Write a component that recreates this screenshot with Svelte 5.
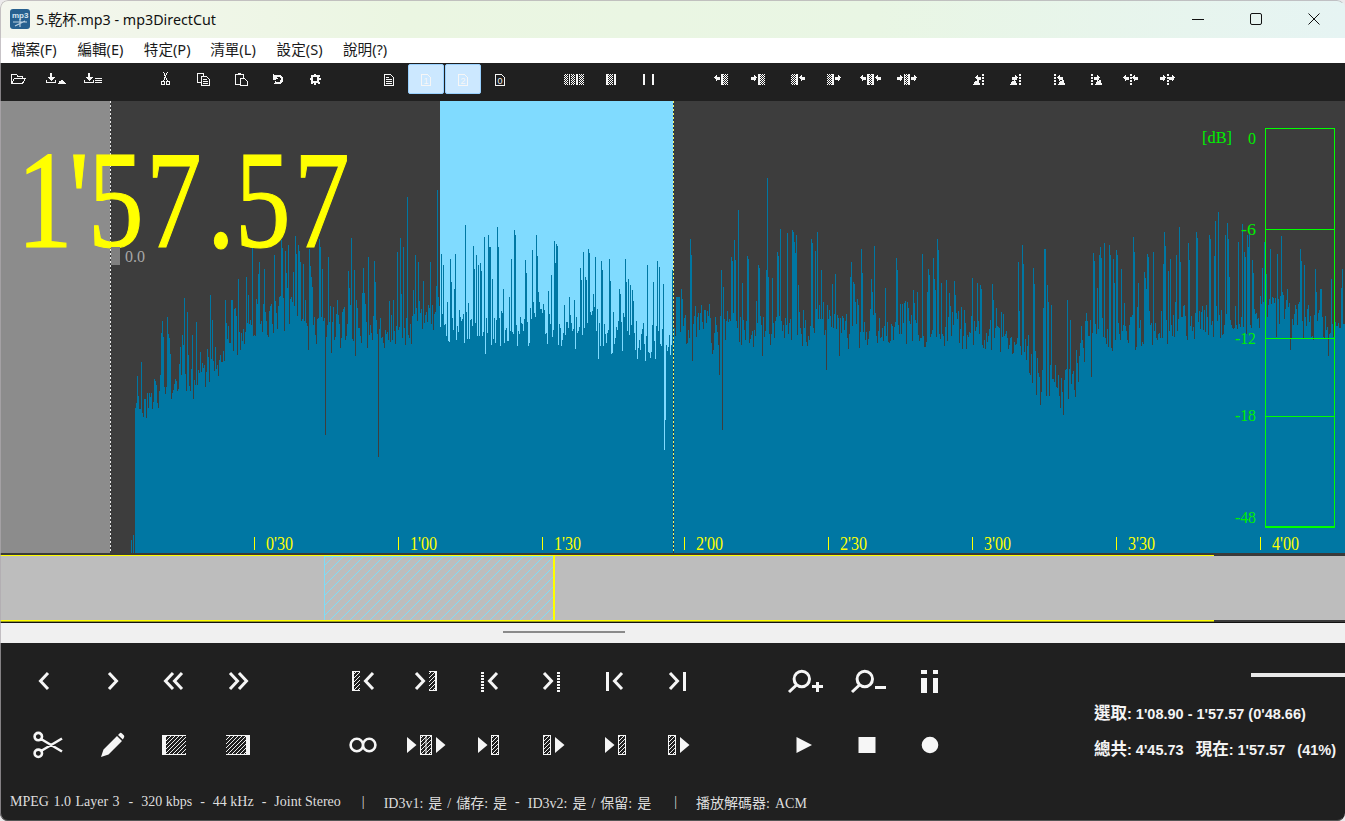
<script>
  const menus = ['檔案(F)', '編輯(E)', '特定(P)', '清單(L)', '設定(S)', '說明(?)'];

  // small path helpers, coordinates are plain pixels inside each icon box
  const r = (x, y, w, h) => `M${x} ${y}h${w}v${h}h${-w}z`;
  const chevL = (x) => `M${x + 9} 8L${x + 1.5} 16L${x + 9} 24`;
  const chevR = (x) => `M${x} 8L${x + 7.5} 16L${x} 24`;
  const tri = (x) => `M${x} 8L${x + 9.5} 16L${x} 24z`;
  const frameL = (x) => r(x, 6, 2, 20) + r(x, 6, 8, 1) + r(x, 25, 8, 1);
  const frameR = (x) => r(x + 6, 6, 2, 20) + r(x, 6, 8, 1) + r(x, 25, 8, 1);
  const box = (x) => r(x, 6, 8, 1) + r(x, 25, 8, 1) + r(x, 6, 1, 20) + r(x + 7, 6, 1, 20);
  const dashes = (x) => [7, 10, 13, 16, 19, 22, 25].map((y) => r(x, y, 3, 2)).join('');

  const rowA = [
    [
      { s: chevL(7) },
      { s: chevR(14) },
      { s: chevL(6) + chevL(15) },
      { s: chevR(9) + chevR(18) }
    ],
    [
      { h: r(5, 6, 8, 20), f: frameL(5), s: chevL(17) },
      { h: r(19, 6, 8, 20), f: frameR(19), s: chevR(6) },
      { f: dashes(8), s: chevL(15) },
      { f: dashes(21), s: chevR(8) },
      { f: r(7, 7, 3, 19), s: chevL(14) },
      { f: r(21, 7, 3, 19), s: chevR(8) }
    ],
    [
      {
        w: 3,
        s: 'M21.5 14a7.7 7.7 0 1 1-15.4 0a7.7 7.7 0 1 1 15.4 0M8.5 20L1 27',
        f: r(24, 20, 11, 3) + r(28, 17, 3, 10)
      },
      {
        w: 3,
        s: 'M21.5 14a7.7 7.7 0 1 1-15.4 0a7.7 7.7 0 1 1 15.4 0M8.5 20L1 27',
        f: r(24, 21, 11, 3)
      },
      { f: r(7, 5, 6, 4) + r(19, 5, 5, 4) + r(7, 13, 6, 15) + r(19, 13, 5, 15) }
    ]
  ];

  const rowB = [
    [
      {
        w: 2.6,
        s: 'M10 7.6a3.7 3.7 0 1 1-7.4 0a3.7 3.7 0 1 1 7.4 0M10 24.3a3.7 3.7 0 1 1-7.4 0a3.7 3.7 0 1 1 7.4 0M9 10L30 22.5M9 22L30 9.5'
      },
      {
        f: 'M6 28L8.5 20.5L22 7L27 12L13.5 25.5zM23 6L25 4Q26 3.5 27 4.5L29 6.5Q29.5 7.5 29 8.5L27.8 10.5z'
      },
      { h: r(4, 6, 24, 20), f: r(4, 6, 4, 20) + r(4, 6, 24, 1) + r(4, 25, 24, 1) },
      { h: r(5, 6, 24, 20), f: r(25, 6, 4, 20) + r(5, 6, 24, 1) + r(5, 25, 24, 1) }
    ],
    [
      {
        w: 2.6,
        s: 'M16 16a6.2 6.2 0 1 1-12.4 0a6.2 6.2 0 1 1 12.4 0M28.4 16a6.2 6.2 0 1 1-12.4 0a6.2 6.2 0 1 1 12.4 0'
      },
      {
        h: r(10, 6, 12, 20),
        f: tri(-3) + tri(26) + r(10, 6, 12, 1) + r(10, 25, 12, 1) + r(10, 6, 1, 20) + r(15.5, 6, 1, 20) + r(21, 6, 1, 20)
      },
      { h: r(18, 6, 8, 20), f: tri(5) + box(18) },
      { h: r(7, 6, 8, 20), f: tri(19) + box(7) },
      { h: r(19, 6, 8, 20), f: tri(6) + box(19) },
      { h: r(6, 6, 8, 20), f: tri(18) + box(6) }
    ],
    [
      { f: 'M8.5 8L24 16L8.5 24z' },
      { f: r(7.5, 8, 17, 16) },
      { f: 'M24.3 16a8.3 8.3 0 1 1-16.6 0a8.3 8.3 0 1 1 16.6 0z' }
    ]
  ];

  const aL = (x) => `M${x} 6.5l3-3v2h3v3h-3v2z`;
  const aR = (x) => `M${x + 6} 6.5l-3-3v2h-3v3h3v2z`;
  const tdots = (x) => [3, 6, 9, 12].map((y) => r(x, y, 2, 2)).join('');
  const hill = (x) => `M${x} 14l2-4 1 1 2-3 1 2 1 4z`;
  const page = 'M3.5 3.5h6l3 3v8h-9z';
  const dl = r(4, 2, 2, 5) + 'M1 6h8l-4 4z' + r(0, 11, 10, 1) + r(0, 9, 1, 2) + r(9, 9, 1, 2);

  // center is the x of the icon on the toolbar
  const tools = [
    { center: 18, s: 'M1.5 12.5V3.5h5l1 1.5h5v2M1.5 12.5h11l3-5.5h-11z' },
    { center: 54, f: dl + 'M12 13l2-4 1 2 1-3 2 3 1-1 1 3z' },
    { center: 92, f: dl + r(11, 7, 7, 1) + r(11, 9, 7, 1) + r(11, 11, 7, 1) },
    {
      center: 165,
      s: 'M8 12a2 2 0 1 1-4 0a2 2 0 1 1 4 0M13 12a2 2 0 1 1-4 0a2 2 0 1 1 4 0M6.5 10L10.5 1M10.5 10L6.5 1'
    },
    {
      center: 204,
      s: 'M1.5 11.5v-9h6v2M1.5 11.5h3M5.5 5.5h5l3 3v6h-8z',
      f: r(7, 8, 4, 1) + r(7, 10, 5, 1) + r(7, 12, 5, 1)
    },
    { center: 241, s: 'M6.5 13.5h-4v-10h8v3M7.5 7.5h4l3 3v4h-7z', f: r(5, 2, 3, 2) },
    { center: 278, w: 2.4, s: 'M5 11.5c4 2 7 0 7-3.5c0-3-4-4-7-2', f: 'M3 3l0 6l5-1z' },
    {
      center: 315,
      w: 2,
      s: 'M11.5 8a3.5 3.5 0 1 1-7 0a3.5 3.5 0 1 1 7 0',
      f:
        r(7, 2.5, 2, 2) + r(7, 11.5, 2, 2) + r(2.5, 7, 2, 2) + r(11.5, 7, 2, 2) +
        r(3.5, 3.5, 2, 2) + r(10.5, 3.5, 2, 2) + r(3.5, 10.5, 2, 2) + r(10.5, 10.5, 2, 2)
    },
    { center: 389, s: page, f: r(5, 6, 3, 1) + r(5, 8, 6, 1) + r(5, 10, 6, 1) + r(5, 12, 6, 1) },
    { center: 426, s: page, t: '1', on: true },
    { center: 463, s: page, t: '2', on: true },
    { center: 500, s: page, t: '0' },
    {
      center: 574,
      c: r(-2, 3, 4, 11) + r(5, 3, 4, 11) + r(13, 3, 5, 11),
      f: r(3, 3, 1, 11) + r(10, 3, 2, 11)
    },
    { center: 611, c: r(5, 3, 5, 11), f: r(3, 3, 2, 11) + r(11, 3, 2, 11) },
    { center: 648, f: r(3, 3, 2, 11) + r(12, 3, 2, 11) },
    { center: 720, c: r(11, 3, 5, 11), f: aL(2) + r(9, 3, 2, 11) },
    { center: 757, c: r(11, 3, 5, 11), f: aR(2) + r(9, 3, 2, 11) },
    { center: 797, c: r(2, 3, 5, 11), f: r(7, 3, 2, 11) + aL(10) },
    { center: 834, c: r(1, 3, 5, 11), f: r(6, 3, 2, 11) + aR(9) },
    { center: 870, c: r(7, 3, 3, 11), f: aL(-2) + r(5, 3, 2, 11) + r(10, 3, 2, 11) + aL(13) },
    { center: 907, c: r(6, 3, 3, 11), f: aR(-2) + r(5, 3, 1, 11) + r(9, 3, 2, 11) + aR(12) },
    { center: 978, f: aL(5) + hill(3) + tdots(12) },
    { center: 1015, f: aR(5) + hill(3) + tdots(12) },
    { center: 1059, f: tdots(3) + aL(6) + hill(7) },
    { center: 1096, f: tdots(3) + aR(6) + hill(7) },
    { center: 1130, f: aL(1) + tdots(8) + aL(10) },
    { center: 1167, f: aR(1) + tdots(8) + aR(10) }
  ];

  // piecewise linear level over x
  function lerp(points, x) {
    for (let i = 1; i < points.length; i++) {
      if (x <= points[i][0]) {
        const [x0, y0] = points[i - 1];
        const [x1, y1] = points[i];
        return y0 + ((y1 - y0) * (x - x0)) / (x1 - x0);
      }
    }
    return points[points.length - 1][1];
  }

  const bodyLine = [
    [135, 440], [150, 405], [200, 385], [240, 350], [250, 330], [290, 330], [300, 340], [400, 338],
    [440, 332], [520, 338], [610, 345], [670, 355], [676, 335], [800, 338],
    [900, 335], [1000, 345], [1030, 382], [1060, 400], [1075, 392], [1085, 350], [1200, 328], [1345, 332]
  ];
  const peakLine = [
    [135, 400], [140, 325], [160, 305], [200, 290], [240, 250], [260, 240], [300, 235], [400, 225],
    [440, 215], [520, 225], [600, 250], [670, 262], [680, 232], [700, 225], [800, 225], [900, 235],
    [1000, 240], [1100, 235], [1150, 230], [1220, 215], [1345, 250]
  ];
  const spikes = {
    131: 540, 133: 535, 325: 435, 378: 457, 407: 197, 437: 190, 664: 450, 665: 420, 722: 430,
    719: 375, 767: 178, 738: 210, 1218: 212, 1040: 405, 1063: 415, 826: 370,
    676: 297, 677: 297, 678: 297, 679: 297
  };

  let seed = 4711;
  function rnd() {
    seed = (seed + 0x6d2b79f5) | 0;
    let t = Math.imul(seed ^ (seed >>> 15), 1 | seed);
    t = (t + Math.imul(t ^ (t >>> 7), 61 | t)) ^ t;
    return ((t ^ (t >>> 14)) >>> 0) / 4294967296;
  }

  let wave = '';
  let wobble = 0;
  let lastSpike = 0;
  for (let x = 130; x < 1345; x++) {
    let top;
    if (spikes[x]) {
      top = spikes[x];
    } else if (x < 135) {
      continue;
    } else {
      wobble = wobble * 0.92 + (rnd() - 0.5) * 9;
      const base = lerp(bodyLine, x);
      const peak = lerp(peakLine, x);
      const mid = base - 20 + wobble;
      const pick = rnd();
      if (lastSpike && rnd() < 0.3) top = lastSpike + rnd() * 25;
      else if (pick < 0.27) top = mid - (mid - peak) * Math.pow(rnd(), 0.85);
      else if (pick < 0.62) top = mid + rnd() * (base - mid + 10);
      else if (pick < 0.64) top = base + rnd() * 30;
      else top = mid + (rnd() - 0.5) * 24;
      lastSpike = pick < 0.27 ? top : 0;
    }
    wave += `M${x}.5 ${top.toFixed(0)}V553`;
  }

  const ticks = [
    [254, "0'30"], [398, "1'00"], [542, "1'30"], [684, "2'00"],
    [828, "2'30"], [972, "3'00"], [1116, "3'30"], [1260, "4'00"]
  ];
  const dbLabels = [
    ['0', 144, 1256, 8],
    ['-6', 235, 1256, 15],
    ['-12', 344, 1256, 21],
    ['-18', 421, 1256, 21],
    ['-48', 523, 1256, 21]
  ];
  // left origin of each glyph of the big clock, before the x squeeze
  const bigX = [17, 69, 88, 146, 207, 235, 294].map((x) => (x / 0.8).toFixed(1)).join(' ');
</script>

{#snippet icon(i, cls)}
  <svg class={cls} viewBox={cls === 'ic' ? '0 0 32 32' : '0 0 16 16'}>
    {#if i.h}<path d={i.h} fill="url(#hatch)" />{/if}
    {#if i.c}<path d={i.c} fill="url(#chk)" />{/if}
    {#if i.f}<path d={i.f} fill="#f6f6f6" />{/if}
    {#if i.s}<path d={i.s} fill="none" stroke="#f6f6f6" stroke-width={i.w ?? (cls === 'ic' ? 3 : 1)} />{/if}
    {#if i.t}<text class="pagenum" x="8" y="13">{i.t}</text>{/if}
  </svg>
{/snippet}

<svg class="defs" width="0" height="0">
  <defs>
    <pattern id="hatch" width="4" height="4" patternUnits="userSpaceOnUse">
      <path d="M-1 1L1 -1M0 4L4 0M3 5L5 3" stroke="#f0f0f0" stroke-width="1" />
    </pattern>
    <pattern id="chk" width="2" height="2" patternUnits="userSpaceOnUse">
      <rect width="1" height="1" fill="#fff" />
      <rect x="1" y="1" width="1" height="1" fill="#fff" />
    </pattern>
    <pattern id="selhatch" width="10" height="10" patternUnits="userSpaceOnUse">
      <path d="M-1 1L1 -1M0 10L10 0M9 11L11 9" stroke="#7fdcf5" stroke-width="1" />
    </pattern>
  </defs>
</svg>

<div class="window">
  <header class="titlebar">
    <svg class="logo" viewBox="0 0 20 20">
      <rect width="20" height="20" rx="3" fill="#27608f" />
      <text x="2" y="9" class="logotext">mp3</text>
      <path d="M3 13h14M10 10v8M5 17l10-5" stroke="#b9cfe0" stroke-width="1.2" fill="none" />
    </svg>
    <span class="title">5.乾杯.mp3 - mp3DirectCut</span>
    <div class="winbtns">
      <svg viewBox="0 0 12 12"><path d="M0 6.5h12" stroke="#111" fill="none" /></svg>
      <svg viewBox="0 0 12 12"><rect x=".5" y=".5" width="11" height="11" rx="1.5" stroke="#111" fill="none" /></svg>
      <svg viewBox="0 0 12 12"><path d="M.5.5l11 11M11.5.5l-11 11" stroke="#111" fill="none" /></svg>
    </div>
  </header>

  <nav class="menubar">
    {#each menus as m}<span class="menu">{m}</span>{/each}
  </nav>

  <div class="toolbar">
    {#each tools as t, i}
      <div
        class="tool"
        class:on={t.on}
        style="margin-left: {i ? t.center - tools[i - 1].center - 36 : t.center - 18}px"
      >
        {@render icon(t, 'tb')}
      </div>
    {/each}
  </div>

  <svg class="wave" viewBox="0 101 1345 452">
    <rect x="0" y="101" width="1345" height="452" fill="#3d3d3d" />
    <rect x="0" y="101" width="110" height="452" fill="#8c8c8c" />
    <rect x="440" y="101" width="233" height="452" fill="#80dbff" />
    <path d={wave} stroke="#0077a3" stroke-width="1" shape-rendering="crispEdges" />
    <path d="M110.5 101V553" stroke="#e6e6e6" stroke-dasharray="2 2" shape-rendering="crispEdges" />
    <path d="M673.5 101V553" stroke="#1d3d50" shape-rendering="crispEdges" />
    <path d="M673.5 101V553" stroke="#f4f46a" stroke-dasharray="2 2" shape-rendering="crispEdges" />

    <text class="bigtime" x={bigX} y="247" transform="scale(0.8 1)">1'57.57</text>
    <rect x="111" y="247" width="9" height="18" fill="#808080" />
    <text class="zero" x="125" y="262">0.0</text>

    {#each ticks as [x, label]}
      <path d="M{x}.5 537V550" stroke="#ffff00" shape-rendering="crispEdges" />
      <text class="tick" x={x + 12} y="550" textLength="27" lengthAdjust="spacingAndGlyphs">{label}</text>
    {/each}

    <text class="db" x="1202" y="143" textLength="30" lengthAdjust="spacingAndGlyphs">[dB]</text>
    {#each dbLabels as [label, y, right, w]}
      <text class="db" x={right - w} {y} textLength={w} lengthAdjust="spacingAndGlyphs">{label}</text>
    {/each}
    <path
      d="M1265.5 128.5H1334V526.5H1265.5ZM1265.5 229.5H1334M1265.5 338.5H1334M1265.5 416.5H1334"
      fill="none"
      stroke="#00ff00"
      shape-rendering="crispEdges"
    />
    <rect x="1265" y="526" width="70" height="2" fill="#00ff00" />
  </svg>

  <svg class="overview" viewBox="0 553 1345 70">
    <rect x="0" y="553" width="1345" height="70" fill="#3a3a3a" />
    <rect x="0" y="556" width="1345" height="64" fill="#bdbdbd" />
    <rect x="0" y="622" width="1345" height="1" fill="#111" />
    <rect x="324" y="556" width="229" height="64" fill="url(#selhatch)" />
    <rect x="324" y="556" width="229" height="1" fill="#7fdcf5" />
    <rect x="324" y="556" width="1" height="64" fill="#7fdcf5" />
    <rect x="0" y="555" width="1214" height="1" fill="#ffff00" />
    <rect x="0" y="620" width="1214" height="1.5" fill="#ffff00" />
    <rect x="553" y="556" width="2" height="64" fill="#ffff00" />
  </svg>

  <div class="splitter"><div class="grip"></div></div>

  <section class="panel">
    <div class="controls">
      <div class="group" style="--n: 4">
        {#each rowA[0] as i}{@render icon(i, 'ic')}{/each}
        {#each rowB[0] as i}{@render icon(i, 'ic')}{/each}
      </div>
      <div class="group second" style="--n: 6">
        {#each rowA[1] as i}{@render icon(i, 'ic')}{/each}
        {#each rowB[1] as i}{@render icon(i, 'ic')}{/each}
      </div>
      <div class="group third" style="--n: 3">
        {#each rowA[2] as i}{@render icon(i, 'ic')}{/each}
        {#each rowB[2] as i}{@render icon(i, 'ic')}{/each}
      </div>
      <div class="info">
        <div class="slider"></div>
        <div class="line first"><span class="cjk">選取</span>: 1'08.90 - 1'57.57 (0'48.66)</div>
        <div class="line">
          <span class="cjk">總共</span>: 4'45.73<span class="cjk next">現在</span>: 1'57.57<span class="next">(41%)</span>
        </div>
      </div>
    </div>

    <footer class="status">
      <span class="spaced first">MPEG 1.0 Layer 3</span><span>-</span><span>320 kbps</span><span>-</span><span>44 kHz</span><span>-</span><span>Joint Stereo</span>
      <span class="sep">|</span>
      <span class="tags">ID3v1: 是 / 儲存: 是</span><span>-</span><span class="tags">ID3v2: 是 / 保留: 是</span>
      <span class="sep wide">|</span>
      <span class="tags">播放解碼器: ACM</span>
    </footer>
  </section>
</div>

<style>
  :global(body) {
    margin: 0;
    background: #eceaec;
  }

  .defs {
    position: absolute;
  }

  .window {
    position: relative;
    width: 1345px;
    height: 821px;
    border-radius: 8px;
    overflow: hidden;
    display: flex;
    flex-direction: column;
    font-family: 'Noto Sans', 'Noto Sans CJK TC', sans-serif;
  }

  .window::after {
    content: '';
    position: absolute;
    inset: 0;
    border: 1px solid rgba(175, 170, 175, 0.7);
    border-right-color: transparent;
    border-bottom-color: rgba(120, 120, 120, 0.6);
    border-radius: 8px;
    pointer-events: none;
  }

  .titlebar {
    height: 38px;
    flex: none;
    display: flex;
    align-items: center;
    padding-left: 10px;
    background: linear-gradient(90deg, #f4f6ee 0, #ebf6e2 30%, #e9f6e4 65%, #e6f4f3 100%);
  }

  .logo {
    width: 20px;
    height: 20px;
    margin-right: 6px;
  }

  .logotext {
    font: bold 8px 'Liberation Sans', sans-serif;
    fill: #d5e4ef;
  }

  .title {
    font-size: 14.3px;
    color: #111;
    white-space: nowrap;
    margin-top: -2px;
  }

  .winbtns {
    margin-left: auto;
    margin-right: 25px;
    display: flex;
    gap: 46px;
  }

  .winbtns svg {
    width: 12px;
    height: 12px;
    overflow: visible;
  }

  .menubar {
    height: 25px;
    flex: none;
    background: #fff;
    display: flex;
    align-items: center;
    padding-left: 1px;
  }

  .menu {
    width: 46.4px;
    padding: 0 10px;
    font-size: 14.6px;
    color: #1a1a1a;
    white-space: nowrap;
    margin-top: -4px;
  }

  .toolbar {
    height: 38px;
    flex: none;
    background: #202020;
    display: flex;
    align-items: flex-start;
    box-sizing: border-box;
    padding-top: 1px;
  }

  .tool {
    width: 36px;
    height: 30px;
    flex: none;
    box-sizing: border-box;
    display: flex;
    align-items: center;
    justify-content: center;
    border: 1px solid transparent;
    border-radius: 2px;
  }

  .tool.on {
    background: #cce8ff;
    border-color: #99d1ff;
  }

  .tb {
    width: 16px;
    height: 16px;
    overflow: visible;
    shape-rendering: crispEdges;
  }

  .pagenum {
    font: 9px 'Liberation Sans', sans-serif;
    fill: #f6f6f6;
    text-anchor: middle;
  }

  .wave {
    display: block;
    width: 1345px;
    height: 452px;
    flex: none;
  }

  .bigtime {
    font: 139px 'Liberation Serif', serif;
    fill: #ffff00;
    stroke: #ffff00;
    stroke-width: 1.2px;
  }

  .zero {
    font: 16px 'Liberation Serif', serif;
    fill: #a8a8a8;
  }

  .tick {
    font: 18px 'Liberation Serif', serif;
    fill: #ffff00;
  }

  .db {
    font: 17px 'Liberation Serif', serif;
    fill: #00f000;
  }

  .overview {
    display: block;
    width: 1345px;
    height: 70px;
    flex: none;
  }

  .splitter {
    height: 20px;
    flex: none;
    background: #f0f0f0;
    padding-left: 503px;
    padding-top: 8px;
    box-sizing: border-box;
  }

  .grip {
    width: 122px;
    height: 2px;
    background: #8a8a8a;
  }

  .panel {
    flex: 1;
    background: #202020;
    display: flex;
    flex-direction: column;
  }

  .controls {
    display: flex;
    align-items: flex-start;
    padding: 22px 0 0 16px;
  }

  .group {
    display: grid;
    grid-template-columns: repeat(var(--n), 63px);
    grid-auto-rows: 32px;
    row-gap: 32px;
    justify-items: center;
  }

  .second {
    margin-left: 63px;
  }

  .third {
    margin-left: 63px;
  }

  .ic {
    width: 32px;
    height: 32px;
    overflow: visible;
  }

  .info {
    margin-left: 133px;
    flex: 1;
    padding-top: 8px;
    color: #f4f4f4;
    font: bold 14.5px 'Liberation Sans', 'Noto Sans CJK TC', sans-serif;
    white-space: nowrap;
  }

  .cjk {
    font-size: 16.5px;
  }

  .next {
    margin-left: 12px;
  }

  .slider {
    width: 94px;
    height: 4px;
    margin-left: auto;
    background: #e8e8e8;
  }

  .line {
    height: 20px;
    line-height: 20px;
    margin-top: 16px;
  }

  .line.first {
    margin-top: 26px;
  }

  .status {
    margin-top: 31px;
    height: 20px;
    padding-left: 10px;
    display: flex;
    align-items: center;
    gap: 8px;
    color: #dedede;
    font: 14px 'Liberation Serif', 'Noto Sans CJK TC', serif;
    white-space: nowrap;
  }

  .spaced {
    word-spacing: 1px;
    margin-right: 1px;
  }

  .tags {
    word-spacing: 1.5px;
  }

  .sep {
    margin: 0 11px 0 13px;
  }

  .sep.wide {
    margin-left: 15px;
  }
</style>
